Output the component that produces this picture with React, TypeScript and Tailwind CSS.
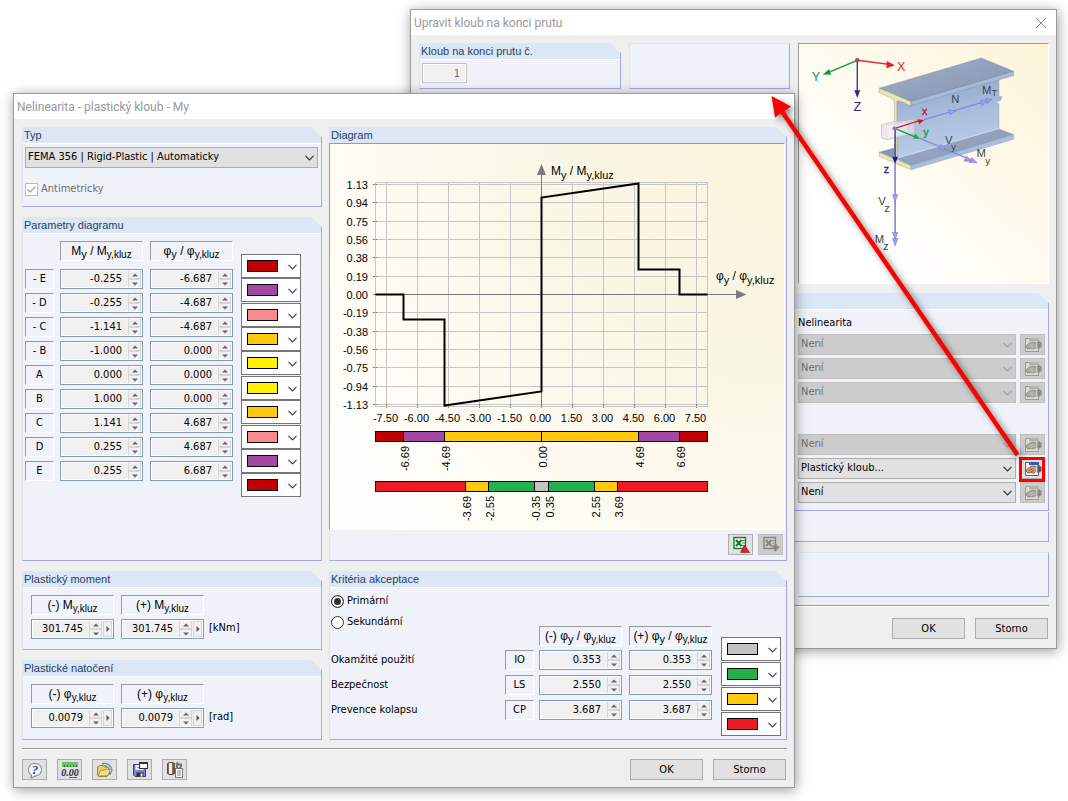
import React from 'react';

type SymbolProps = { pre?: string; main: string; ratio?: boolean };

const points = [
  { name: '- E', m: '-0.255', phi: '-6.687' },
  { name: '- D', m: '-0.255', phi: '-4.687' },
  { name: '- C', m: '-1.141', phi: '-4.687' },
  { name: '- B', m: '-1.000', phi: '0.000' },
  { name: 'A', m: '0.000', phi: '0.000' },
  { name: 'B', m: '1.000', phi: '0.000' },
  { name: 'C', m: '1.141', phi: '4.687' },
  { name: 'D', m: '0.255', phi: '4.687' },
  { name: 'E', m: '0.255', phi: '6.687' },
];

const colorGroups = [
  ['#c00000', '#a349a4'],
  ['#fa8c91', '#ffc90e', '#fff200'],
  ['#fff200', '#ffc90e'],
  ['#fa8c91', '#a349a4', '#c00000'],
];

const criteria = [
  { title: 'Okamžité použití', code: 'IO', value: '0.353' },
  { title: 'Bezpečnost', code: 'LS', value: '2.550' },
  { title: 'Prevence kolapsu', code: 'CP', value: '3.687' },
];

const criteriaColors = ['#c3c3c3', '#22b14c', '#ffc90e', '#ed1c24'];

const yTicks = ['1.13', '0.94', '0.75', '0.56', '0.38', '0.19', '0.00', '-0.19', '-0.38', '-0.56', '-0.75', '-0.94', '-1.13'];
const xTicks = ['-7.50', '-6.00', '-4.50', '-3.00', '-1.50', '0.00', '1.50', '3.00', '4.50', '6.00', '7.50'];

const curve: [number, number][] = [
  [-8.05, 0],
  [-6.687, 0],
  [-6.687, -0.255],
  [-4.687, -0.255],
  [-4.687, -1.141],
  [0, -1],
  [0, 1],
  [4.687, 1.141],
  [4.687, 0.255],
  [6.687, 0.255],
  [6.687, 0],
  [8.05, 0],
];

const limitBar = [
  { from: -8.05, to: -6.687, color: '#c00000' },
  { from: -6.687, to: -4.687, color: '#a349a4' },
  { from: -4.687, to: 0, color: '#ffc90e' },
  { from: 0, to: 4.687, color: '#ffc90e' },
  { from: 4.687, to: 6.687, color: '#a349a4' },
  { from: 6.687, to: 8.05, color: '#c00000' },
];

const criteriaBar = [
  { from: -8.05, to: -3.687, color: '#ed1c24' },
  { from: -3.687, to: -2.55, color: '#ffc90e' },
  { from: -2.55, to: -0.353, color: '#22b14c' },
  { from: -0.353, to: 0.353, color: '#c3c3c3' },
  { from: 0.353, to: 2.55, color: '#22b14c' },
  { from: 2.55, to: 3.687, color: '#ffc90e' },
  { from: 3.687, to: 8.05, color: '#ed1c24' },
];

const px = (x: number) => Math.round(211 + x * 20.66) + 0.5;
const py = (y: number) => Math.round(150 - y * 97.4) + 0.5;

function Chevron({ className = '' }: { className?: string }) {
  return (
    <svg viewBox="0 0 9 6" className={`pointer-events-none absolute h-[6px] w-[9px] ${className}`} fill="none" stroke="currentColor" strokeWidth="1.2">
      <path d="M0.5 0.8 4.5 4.8 8.5 0.8" />
    </svg>
  );
}

function Panel({ title, className = '', children }: { title: string; className?: string; children?: React.ReactNode }) {
  return (
    <section
      className={`flex flex-col border-b border-l border-r border-b-[#a5a5ea] border-l-[#dce4f5] border-r-[#a5a5ea] bg-[#eff3f9] [clip-path:polygon(0_0,calc(100%-11px)_0,100%_10px,100%_100%,0_100%)] ${className}`}
    >
      <h2 className="h-[17px] shrink-0 border-b border-white bg-[#dce6f5] pl-px font-['Liberation_Sans',sans-serif] text-[11px] leading-4 text-[#1f3f6b]">
        {title}
      </h2>
      {children}
    </section>
  );
}

function Symbol({ pre, main, ratio }: SymbolProps) {
  return (
    <span className="font-['Liberation_Sans',sans-serif] text-[12px] leading-4 whitespace-nowrap">
      {pre && `${pre} `}
      {main}
      {ratio && (
        <>
          <sub className="text-[11px]">y</sub> / {main}
        </>
      )}
      <sub className="text-[10px]">y,kluz</sub>
    </span>
  );
}

function Sunken({ className = '', children }: { className?: string; children: React.ReactNode }) {
  return (
    <div className={`flex h-5 items-center justify-center border border-t-[#9a9a9a] border-r-white border-b-white border-l-[#9a9a9a] text-[11px] ${className}`}>
      {children}
    </div>
  );
}

function SpinField({ label, value, more }: { label: string; value: string; more?: boolean }) {
  return (
    <div className="flex h-5 w-[83px] border border-[#7f9db9] bg-[#f0f0f0] ring-1 ring-white ring-inset">
      <input aria-label={label} defaultValue={value} className="w-0 min-w-0 flex-1 bg-transparent pr-[6px] text-right text-[11px] leading-4 outline-none" />
      <div className="my-px mr-px flex w-[13px] flex-col border-x border-[#d6d6d6]">
        <button aria-label="+" className="flex flex-1 items-center justify-center border-b border-[#d6d6d6]">
          <svg viewBox="0 0 6 4" className="h-1 w-[6px]" fill="#666">
            <path d="M0 3.5 3 0.5 6 3.5z" />
          </svg>
        </button>
        <button aria-label="-" className="flex flex-1 items-center justify-center border-t border-[#d6d6d6]">
          <svg viewBox="0 0 6 4" className="h-1 w-[6px]" fill="#666">
            <path d="M0 0.5 3 3.5 6 0.5z" />
          </svg>
        </button>
      </div>
      {more && (
        <button aria-label=">" className="my-px mr-px flex w-[9px] items-center justify-center border border-[#d6d6d6]">
          <svg viewBox="0 0 4 6" className="h-[6px] w-1" fill="#555">
            <path d="M0.5 0 3.5 3 0.5 6z" />
          </svg>
        </button>
      )}
    </div>
  );
}

function ColorSelect({ color, label }: { color: string; label: string }) {
  return (
    <div className="relative h-6 w-[60px]">
      <select aria-label={label} className="block h-full w-full appearance-none border border-[#767676] bg-white">
        <option value={color}></option>
      </select>
      <span className="pointer-events-none absolute top-[6px] left-[6px] h-3 w-[31px] border border-black" style={{ backgroundColor: color }} />
      <Chevron className="top-[10px] right-1 text-[#444]" />
    </div>
  );
}

function Select({ label, value, disabled }: { label: string; value: string; disabled?: boolean }) {
  return (
    <div className={`relative h-[21px] flex-1 ${disabled ? 'text-[#6d6d6d]' : 'text-black'}`}>
      <select
        aria-label={label}
        disabled={disabled}
        className={`block h-full w-full appearance-none border pl-[2px] text-[11px] opacity-100 ${disabled ? 'border-[#bfbfbf] bg-[#cccccc]' : 'border-[#adadad] bg-[#e1e1e1]'}`}
      >
        <option>{value}</option>
      </select>
      <Chevron className={`top-2 right-1 ${disabled ? 'text-[#a0a0a0]' : 'text-[#333]'}`} />
    </div>
  );
}

function ToolButton({ label, disabled, children }: { label: string; disabled?: boolean; children: React.ReactNode }) {
  return (
    <button
      aria-label={label}
      disabled={disabled}
      className={`flex h-[21px] w-[25px] shrink-0 items-center justify-center border ${disabled ? 'border-[#bfbfbf] bg-[#cccccc]' : 'border-[#adadad] bg-[#e1e1e1]'}`}
    >
      <svg viewBox="0 0 18 18" className="h-[18px] w-[18px]">
        {children}
      </svg>
    </button>
  );
}

function EditIcon({ active }: { active?: boolean }) {
  return (
    <>
      <path d="M1.500 2.500h13v13h-13z" fill={active ? '#eef2f8' : '#dcdcd6'} stroke={active ? '#666' : '#9a9a94'} />
      <path d="M5 2h10v3H5z" fill={active ? '#2f5fc0' : '#b4b4ae'} />
      <path
        d="M1.500 10.500 5 7.500 8 6 13 6.500V11L9.500 13 6.500 12.500 4 13z"
        fill={active ? '#d99c70' : '#a9a9a2'}
        stroke={active ? '#5f422e' : '#7b7b74'}
        strokeWidth="0.7"
      />
      <path d="M5 10.500 8.500 8.500M7 12 10 10" stroke={active ? '#5f422e' : '#dadad4'} strokeWidth="0.7" />
      <path d="M13 5.500h2.500L17.500 7v4l-2 1.500H13z" fill={active ? '#5d5550' : '#8a8a84'} />
      <path d="M12.800 6v6" stroke={active ? '#fff' : '#e2e2dc'} />
    </>
  );
}

function ExcelIcon({ muted }: { muted?: boolean }) {
  const dark = muted ? '#85857d' : '#1f7a35';
  return (
    <>
      <rect x="2" y="1.500" width="11.500" height="11" fill={muted ? '#d0d0ca' : '#e8f4e8'} stroke={dark} strokeWidth="1.400" />
      <path d="M4 4 9.500 10M9.500 4 4 10" stroke={dark} strokeWidth="2.200" />
      <path d="M10 4.500h3M10 7h3M10 9.500h2" stroke={dark} strokeWidth="0.8" />
      {muted ? (
        <path d="M9 10h3V8h3v2h3l-4.500 6z" fill="#85857d" stroke="#b5b5ae" strokeWidth="0.6" />
      ) : (
        <path d="M8.500 16.500 12.500 9 17.500 16.500z" fill="#e02020" stroke="#8d1010" strokeWidth="0.6" />
      )}
    </>
  );
}

function PushButton({ children }: { children: React.ReactNode }) {
  return <button className="h-[21px] w-[73px] border border-[#adadad] bg-[#e1e1e1] text-[11px] leading-4">{children}</button>;
}

function DiagramLabel({ x, y, main }: { x: number; y: number; main: string }) {
  return (
    <text x={x} y={y} fontSize="12">
      {main}
      <tspan dy="4" fontSize="11">y</tspan>
      <tspan dy="-4"> / {main}</tspan>
      <tspan dy="4" fontSize="11">y,kluz</tspan>
    </text>
  );
}

function Bar({ segments, y }: { segments: typeof limitBar; y: number }) {
  return (
    <g>
      {segments.map((s, i) => (
        <g key={i}>
          <rect x={px(s.from)} y={y + 0.5} width={px(s.to) - px(s.from)} height="10" fill={s.color} stroke="black" />
          {i > 0 && (
            <text textAnchor="end" transform={`translate(${px(s.from) + 5} ${y + 15}) rotate(-90)`}>
              {s.from.toFixed(2)}
            </text>
          )}
        </g>
      ))}
    </g>
  );
}

function Diagram() {
  return (
    <svg viewBox="0 0 454 385" className="h-[385px] w-full font-['Liberation_Sans',sans-serif] text-[11px]">
      {yTicks.map((t, i) => {
        const y = Math.round(40 + (i * 110) / 6) + 0.5;
        return (
          <g key={t}>
            <path d={`M45 ${y}H377`} stroke="#c6c6c6" />
            <path d={`M43 ${y}H47`} stroke="#777" />
            <text x="38" y={y + 4} textAnchor="end">
              {t}
            </text>
          </g>
        );
      })}
      {xTicks.map((t, i) => {
        const x = 56.5 + i * 31;
        return (
          <g key={t}>
            <path d={`M${x} 38V262`} stroke="#c6c6c6" />
            <path d={`M${x} 260V264`} stroke="#777" />
            <text x={x - 1} y="278" textAnchor="middle">
              {t}
            </text>
          </g>
        );
      })}
      <rect x="45.5" y="38.5" width="332" height="224" fill="none" stroke="#c6c6c6" />
      <path d="M45 150.5H407M211.5 30V262" stroke="#777" />
      <path d="M207 31 211.5 20 216 31zM406 146 416.500 150.500 406 155z" fill="#7b7b7b" />
      <polyline points={curve.map(([x, y]) => `${px(x)},${py(y)}`).join(' ')} fill="none" stroke="black" strokeWidth="2" />
      <DiagramLabel x={221} y={31} main="M" />
      <DiagramLabel x={386} y={136} main="φ" />
      <Bar segments={limitBar} y={287} />
      <Bar segments={criteriaBar} y={337} />
    </svg>
  );
}

function Beam() {
  return (
    <svg viewBox="57 132 747 720" className="h-[239px] w-full font-['Liberation_Sans',sans-serif]">
      <defs>
        <linearGradient id="web" x1="0" y1="0" x2="0.2" y2="1">
          <stop offset="0" stopColor="#8ba2c6" />
          <stop offset="0.5" stopColor="#a8bddd" />
          <stop offset="1" stopColor="#bacce6" />
        </linearGradient>
        <linearGradient id="flange" x1="0" y1="0" x2="1" y2="1">
          <stop offset="0" stopColor="#a0b0c8" />
          <stop offset="1" stopColor="#8494b0" />
        </linearGradient>
      </defs>
      <path d="M297 458 343 445V480z" fill="#8797b3" stroke="#6b7b95" />
      <path d="M350 290 658 230V288l9 3-5 12-14 4 10 6V390L350 482z" fill="url(#web)" stroke="#8093b3" />
      <path d="M350 478 658 388 702 405 392 498z" fill="url(#flange)" stroke="#76869f" />
      <path d="M350 476 658 386" stroke="#c9d7ea" strokeWidth="4" />
      <path d="M392 498 702 405V419L392 511z" fill="#aabfdd" stroke="#76869f" />
      <path d="M297 265 605 174 702 214 392 305z" fill="url(#flange)" stroke="#69798f" />
      <path d="M392 305 702 214V227L392 318z" fill="#a7bbd8" stroke="#69798f" />
      <path d="M297 265 392 305V318L357 303 350 305V478L357 484 392 498V511L297 471V458L335 474 343 470V305L336 296 297 279z" fill="#e9e4b5" stroke="#8d8b70" />
      <path d="M304 375 343 366 403 359V402L319 420 304 414z" fill="#dfe3ee" fillOpacity="0.65" stroke="#b5b9c4" strokeWidth="2" />
      <path d="M318 379 382 366V402L319 418z" fill="#fff" fillOpacity="0.35" stroke="#c5c7d0" />

      <g strokeWidth="4">
        <path d="M231 181 325 193" stroke="#e03038" />
        <path d="M320 183 344 196 319 205z" fill="#e01c24" />
        <path d="M231 181 150 215" stroke="#0a9a45" />
        <path d="M127 225 146 207 153 224z" fill="#0a9a45" />
        <path d="M231 181V275" stroke="#3c3480" />
        <path d="M222 271H240L231 295z" fill="#2e2880" />
        <circle cx="231" cy="181" r="7" fill="#b0407c" />
      </g>
      <g fontSize="38">
        <text x="351" y="213" fill="#e01c24">X</text>
        <text x="94" y="245" fill="#0a9a45">Y</text>
        <text x="220" y="333" fill="#2e2880">Z</text>
      </g>

      <g strokeWidth="4">
        <path d="M432 360 620 304" stroke="#8688dc" />
        <path d="M506 330 527 334 510 345zM603 301 622 303 607 317zM618 296 637 299 622 312z" fill="#9c9ef0" stroke="#7f80d0" strokeWidth="2" />
        <path d="M344 386 418 363" stroke="#e01c24" />
        <path d="M413 359 433 361 417 374z" fill="#d01820" />
        <path d="M420 416 575 482" stroke="#8688dc" />
        <path d="M482 434 500 449 477 449zM559 470 577 485 553 485zM576 474 592 490 568 489z" fill="#9c9ef0" stroke="#7f80d0" strokeWidth="2" />
        <path d="M344 386 405 412" stroke="#12a040" />
        <path d="M406 402 421 418 399 417z" fill="#10b040" />
        <path d="M345 490V720" stroke="#8688dc" strokeWidth="5" />
        <path d="M337 586H353L345 606zM337 700H353L345 720zM337 718H353L345 740z" fill="#9c9ef0" stroke="#7f80d0" strokeWidth="2" />
        <path d="M345 386V478" stroke="#3030a8" />
        <path d="M336 472H354L345 493z" fill="#1c1ca0" />
        <circle cx="343" cy="386" r="6" fill="#c96b98" />
      </g>
      <g fontSize="32">
        <text x="426" y="345" fill="#c8141c" stroke="#c8141c">x</text>
        <text x="430" y="409" fill="#12a040" stroke="#12a040">y</text>
        <text x="311" y="521" fill="#1c1ca0" stroke="#1c1ca0">z</text>
      </g>
      <g fontSize="34" fill="#444">
        <text x="514" y="309">N</text>
        <text x="607" y="283">M<tspan dy="6" fontSize="28">T</tspan></text>
        <text x="495" y="433">V<tspan dy="18" dx="-4" fontSize="30">y</tspan></text>
        <text x="590" y="473">M<tspan dy="20" dx="-2" fontSize="30">y</tspan></text>
        <text x="294" y="618">V<tspan dy="20" dx="-4" fontSize="34">z</tspan></text>
        <text x="284" y="732">M<tspan dy="20" dx="-4" fontSize="34">z</tspan></text>
      </g>
    </svg>
  );
}

function Window({ title, className, closable, children }: { title: string; className: string; closable?: boolean; children: React.ReactNode }) {
  return (
    <div className={`absolute flex flex-col border border-[#9b9b9b] bg-[#efefef] shadow-[1px_2px_12px_rgba(0,0,0,0.4)] ${className}`}>
      <div className="flex h-[25px] items-center justify-between bg-white pr-[9px] pl-[3px]">
        <h1 className="font-['Roboto',sans-serif] text-[12px] leading-4 text-[#999]">{title}</h1>
        {closable && (
          <button aria-label="×">
            <svg viewBox="0 0 12 12" className="h-3 w-3" stroke="#888">
              <path d="M1 1 11 11M11 1 1 11" />
            </svg>
          </button>
        )}
      </div>
      <div className="flex flex-col pt-2 pr-[7px] pb-[7px] pl-2">{children}</div>
    </div>
  );
}

function HingeWindow() {
  return (
    <Window title="Upravit kloub na konci prutu" closable className="top-[9px] right-[11px] left-[410px]">
      <div className="flex items-start gap-2">
        <Panel title="Kloub na konci prutu č." className="h-[46px] w-[202px]">
          <input
            aria-label="Kloub na konci prutu č."
            defaultValue="1"
            disabled
            className="mt-[3px] ml-[2px] h-5 w-[45px] border border-[#c3c3c3] bg-[#f0f0f0] pr-[6px] text-right text-[11px] text-[#6d6d6d] ring-1 ring-white ring-inset"
          />
        </Panel>
        <div className="h-[46px] flex-1 border border-t-[#dce4f5] border-r-[#a5a5ea] border-b-[#a5a5ea] border-l-[#dce4f5] bg-[#eff3f9]" />
        <div className="w-[251px] border border-t-[#9a9a9a] border-r-white border-b-white border-l-[#9a9a9a] bg-linear-to-tr from-white from-20% to-[#fdf4d8]">
          <Beam />
        </div>
      </div>
      <div className="mt-[9px]">
        <Panel title="" className="h-[218px]">
          <div className="flex w-[250px] flex-col self-end pt-[5px] pr-[3px]">
            <p className="mb-[3px] text-[11px] leading-4">Nelinearita</p>
            <div className="flex flex-col gap-[3px]">
              {['Není', 'Není', 'Není', '', 'Není', 'Plastický kloub...', 'Není'].map((v, i) =>
                v === '' ? (
                  <div key={i} className="h-[25px]" />
                ) : (
                  <div key={i} className="flex gap-1">
                    <Select label="Nelinearita" value={v} disabled={i < 5} />
                    <ToolButton label="Nelinearita" disabled={i !== 5}>
                      <EditIcon active={i === 5} />
                    </ToolButton>
                  </div>
                ),
              )}
            </div>
          </div>
        </Panel>
        <div className="mt-px h-[30px] border-r border-b border-[#a5a5ea] bg-[#eff3f9]" />
        <div className="mt-[10px] flex gap-2">
          <div className="h-[45px] flex-1 border border-t-[#dce4f5] border-r-[#a5a5ea] border-b-[#a5a5ea] border-l-[#dce4f5] bg-[#eff3f9]" />
          <div className="h-[45px] w-[251px] border border-t-[#dce4f5] border-r-[#a5a5ea] border-b-[#a5a5ea] border-l-[#dce4f5] bg-[#eff3f9]" />
        </div>
      </div>
      <hr className="mt-2 h-[2px] border-t border-b border-t-[#9a9a9a] border-b-white" />
      <div className="mt-[11px] mb-[2px] flex justify-end gap-[10px] pr-px">
        <PushButton>OK</PushButton>
        <PushButton>Storno</PushButton>
      </div>
    </Window>
  );
}

function NonlinearityWindow() {
  return (
    <Window title="Nelinearita - plastický kloub - My" className="top-[93px] right-[273px] left-[13px]">
      <div className="grid grid-cols-[300px_1fr] gap-x-[7px] gap-y-[10px]">
        <div className="flex flex-col gap-[10px]">
          <Panel title="Typ" className="h-20">
            <div className="flex flex-col pt-[3px] pr-[3px] pl-[2px]">
              <div className="flex">
                <Select label="Typ" value="FEMA 356 | Rigid-Plastic | Automaticky" />
              </div>
              <label className="mt-[13px] flex items-center gap-[3px] text-[11px] leading-4 text-[#6d6d6d]">
                <span className="relative flex h-[13px] w-[13px]">
                  <input type="checkbox" defaultChecked disabled className="h-[13px] w-[13px] appearance-none border border-[#bcbcbc] bg-white" />
                  <svg viewBox="0 0 13 13" className="absolute inset-0 h-[13px] w-[13px]" fill="none" stroke="#a8a8a8" strokeWidth="1.4">
                    <path d="M2.500 6.500 5 9 10.500 3.500" />
                  </svg>
                </span>
                Antimetricky
              </label>
            </div>
          </Panel>
          <Panel title="Parametry diagramu" className="flex-1">
            <div className="flex items-start pt-[7px] pl-[2px]">
              <table>
                <thead>
                  <tr>
                    <td />
                    <th className="pr-[7px] pb-2 font-normal">
                      <Sunken>
                        <Symbol main="M" ratio />
                      </Sunken>
                    </th>
                    <th className="pr-2 pb-2 font-normal">
                      <Sunken>
                        <Symbol main="φ" ratio />
                      </Sunken>
                    </th>
                  </tr>
                </thead>
                <tbody>
                  {points.map((p) => (
                    <tr key={p.name}>
                      <th className="pr-[6px] pb-1 font-normal">
                        <Sunken className="w-[29px]">{p.name}</Sunken>
                      </th>
                      <td className="pr-[7px] pb-1">
                        <SpinField label={`M ${p.name}`} value={p.m} />
                      </td>
                      <td className="pr-2 pb-1">
                        <SpinField label={`φ ${p.name}`} value={p.phi} />
                      </td>
                    </tr>
                  ))}
                </tbody>
              </table>
              <div className="mt-[13px] flex flex-col gap-px">
                {colorGroups.map((group, i) => (
                  <div key={i} className="flex flex-col">
                    {group.map((color) => (
                      <ColorSelect key={color} color={color} label={color} />
                    ))}
                  </div>
                ))}
              </div>
            </div>
          </Panel>
        </div>

        <Panel title="Diagram">
          <div className="-mt-px mr-px -ml-px border border-t-[#9a9a9a] border-r-white border-b-white border-l-[#9a9a9a] bg-[radial-gradient(circle_at_100%_0%,#fdf3dd_0%,#faf6e4_35%,#fefcf4_75%,#ffffff_100%)]">
            <Diagram />
          </div>
          <div className="flex justify-end gap-[5px] pt-1 pr-[3px] pb-[5px]">
            <ToolButton label="Excel">
              <ExcelIcon />
            </ToolButton>
            <ToolButton label="Excel" disabled>
              <ExcelIcon muted />
            </ToolButton>
          </div>
        </Panel>

        <div className="flex flex-col gap-[10px]">
          {[
            { title: 'Plastický moment', main: 'M', value: '301.745', unit: '[kNm]' },
            { title: 'Plastické natočení', main: 'φ', value: '0.0079', unit: '[rad]' },
          ].map((p) => (
            <Panel key={p.title} title={p.title} className="h-[79px] last:h-20">
              <div className="flex items-end gap-[5px] pt-[7px] pl-2 text-[11px]">
                {['(-)', '(+)'].map((sign) => (
                  <div key={sign} className="mr-[2px] flex flex-col gap-1">
                    <Sunken>
                      <Symbol pre={sign} main={p.main} />
                    </Sunken>
                    <SpinField label={`${sign} ${p.main}`} value={p.value} more />
                  </div>
                ))}
                <span className="-ml-[2px] pb-[3px] leading-4">{p.unit}</span>
              </div>
            </Panel>
          ))}
        </div>

        <Panel title="Kritéria akceptace">
          <div className="flex justify-between pl-px text-[11px] leading-4">
            <div className="flex flex-1 flex-col">
              <div className="mt-[5px] flex flex-col gap-[5px]">
                {['Primární', 'Sekundární'].map((name, i) => (
                  <label key={name} className="flex items-center gap-[3px]">
                    <input
                      type="radio"
                      name="criteria"
                      defaultChecked={i === 0}
                      className="h-[13px] w-[13px] appearance-none rounded-full border border-[#333] bg-white checked:bg-[#333] checked:shadow-[inset_0_0_0_2px_white]"
                    />
                    {name}
                  </label>
                ))}
              </div>
              <table className="-mt-1 w-full">
                <thead>
                  <tr>
                    <td />
                    <td />
                    {['(-)', '(+)'].map((sign) => (
                      <th key={sign} className="w-[90px] pr-[7px] pb-1 font-normal">
                        <Sunken className="w-[83px]">
                          <Symbol pre={sign} main="φ" ratio />
                        </Sunken>
                      </th>
                    ))}
                  </tr>
                </thead>
                <tbody>
                  {criteria.map((c) => (
                    <tr key={c.code}>
                      <th className="pb-[5px] text-left font-normal">{c.title}</th>
                      <td className="w-[34px] pr-[5px] pb-[5px]">
                        <Sunken className="w-[29px]">{c.code}</Sunken>
                      </td>
                      <td className="w-[90px] pr-[7px] pb-[5px]">
                        <SpinField label={`(-) ${c.title}`} value={c.value} />
                      </td>
                      <td className="w-[90px] pr-[7px] pb-[5px]">
                        <SpinField label={`(+) ${c.title}`} value={c.value} />
                      </td>
                    </tr>
                  ))}
                </tbody>
              </table>
            </div>
            <div className="mt-[49px] mr-[5px] ml-[2px] flex flex-col gap-px">
              {criteriaColors.map((color) => (
                <ColorSelect key={color} color={color} label={color} />
              ))}
            </div>
          </div>
        </Panel>
      </div>

      <hr className="mt-2 h-[2px] border-t border-b border-t-[#9a9a9a] border-b-white" />
      <div className="mt-[9px] flex items-center justify-between pr-px">
        <div className="flex gap-[10px]">
          <ToolButton label="?">
            <path d="M9 2.500c4 0 6.500 2.500 6.500 6S13 15 9 15l-4 2 .5-3C3.500 13 2.500 11 2.500 8.500c0-3.500 2.500-6 6.500-6z" fill="#f4f4f6" stroke="#777" />
            <text x="9" y="13" textAnchor="middle" fontSize="13" fontWeight="bold" fontStyle="italic" fill="#2a4690" fontFamily="Liberation Serif">?</text>
          </ToolButton>
          <ToolButton label="0.00">
            <rect x="1" y="1" width="16" height="5" fill="#6fbf6a" />
            <path d="M3.500 4v2M6.500 4v2M9.500 4v2M12.500 4v2M15.500 4v2" stroke="#2f7a34" />
            <text x="9" y="15" textAnchor="middle" fontSize="10" fontWeight="bold" fontStyle="italic" fill="#222c50" fontFamily="Liberation Serif">0.00</text>
            <path d="M8 16.500h8" stroke="#4a5a90" />
          </ToolButton>
          <ToolButton label="...">
            <path d="M6 2.500c5-1.500 10 2 10 7l-2 4-4-8z" fill="#8ea7d8" stroke="#5a6ea8" strokeWidth="0.8" />
            <path d="M8 3.500c4 0 6.500 3 6.500 7" fill="none" stroke="#e8eefc" />
            <path d="M1.500 14V6L4 4.500h3L8.500 6h3l1.500 2v5l-2 2.500H3z" fill="#e8cf6c" stroke="#8a7426" strokeWidth="0.8" />
            <path d="M2 15 4.500 9.500 14.500 8 12 14.500z" fill="#f3e08e" stroke="#8a7426" strokeWidth="0.6" />
          </ToolButton>
          <ToolButton label="...">
            <path d="M2.500 3.500h12v12H4l-1.500-1.500z" fill="#7f80d8" stroke="#3d3d78" />
            <rect x="4.500" y="4" width="8" height="5" fill="#eef" />
            <path d="M6 6.500h4" stroke="#99a" />
            <rect x="5.500" y="11.500" width="7" height="4" fill="#333" />
            <rect x="9.500" y="12.500" width="2" height="3" fill="#eee" />
            <rect x="8.500" y="1.500" width="8" height="6" fill="#fff" stroke="#333" />
            <path d="M8 2h9" stroke="#333" strokeWidth="2" />
          </ToolButton>
          <ToolButton label="...">
            <path d="M1.500 2.500v10c1 1.500 6 1.500 7 0v-10c-1-1.500-6-1.500-7 0z" fill="#7a6a58" stroke="#3a342e" strokeWidth="0.8" />
            <path d="M4.500 2v11" stroke="#f4f0ea" strokeWidth="3" />
            <path d="M11 8V3.500h4V6M10 3.500l2-2M13 7l2-1.500" fill="none" stroke="#777" strokeWidth="2" />
            <rect x="9.500" y="7.500" width="7" height="9" fill="#fafafa" stroke="#777" />
            <path d="M11 10h4M11 12h4M11 14h4" stroke="#888" />
          </ToolButton>
        </div>
        <div className="flex gap-[10px]">
          <PushButton>OK</PushButton>
          <PushButton>Storno</PushButton>
        </div>
      </div>
    </Window>
  );
}

export default function App() {
  return (
    <main className="relative min-h-screen overflow-hidden bg-white font-['DejaVu_Sans_Condensed','Noto_Sans',sans-serif] text-black">
      <HingeWindow />
      <NonlinearityWindow />
      <div className="pointer-events-none absolute top-[457px] right-[23px] h-[25px] w-[26px] border-[3px] border-[#fe0000]" />
      <svg viewBox="0 0 300 480" className="pointer-events-none absolute top-0 right-0 h-[480px] w-[300px] drop-shadow-[3px_3px_3px_rgba(0,0,0,0.5)]">
        <path d="M13 110 249.500 455" stroke="#fe0000" strokeWidth="4.500" />
        <path d="M3.500 96 23 106.500 7 117.500z" fill="#fe0000" />
      </svg>
    </main>
  );
}
